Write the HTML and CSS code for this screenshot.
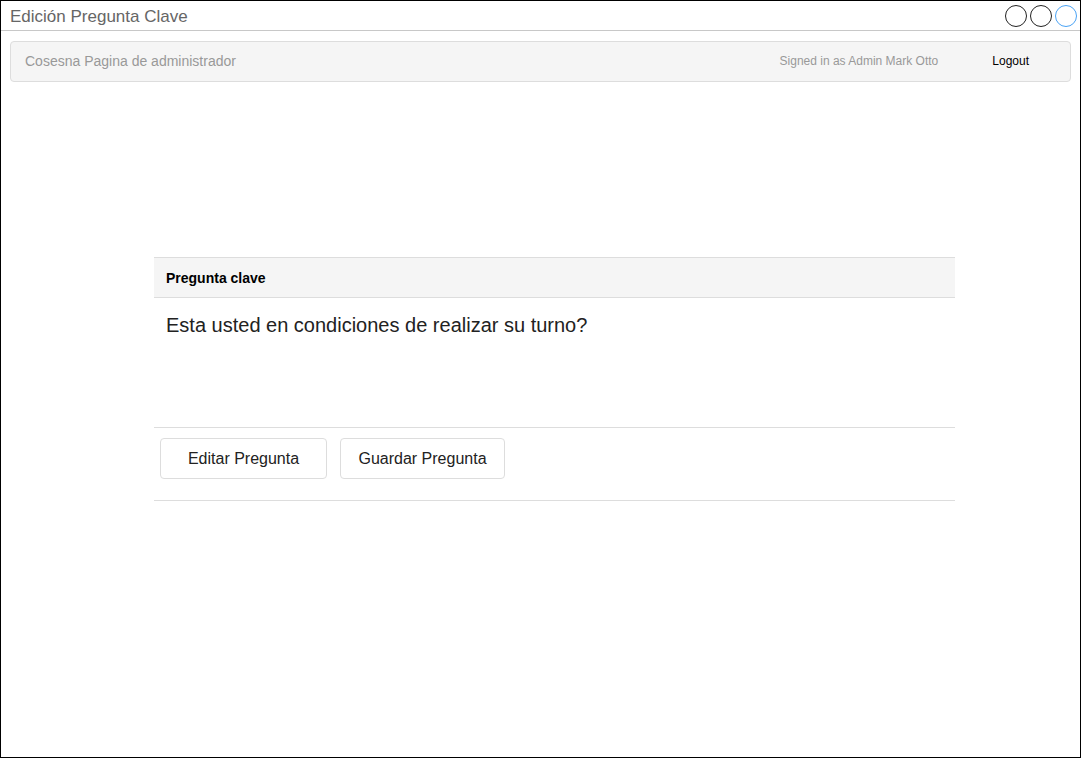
FILE: index.html
```html
<!DOCTYPE html>
<html lang="es">
<head>
<meta charset="utf-8">
<link rel="stylesheet" href="styles.css">
</head>
<body>
<div class="window">
  <div class="titlebar">
    <span class="title">Edición Pregunta Clave</span>
    <div class="controls">
      <span class="dot"></span>
      <span class="dot"></span>
      <span class="dot blue"></span>
    </div>
  </div>
  <div class="navbar">
    <span class="brand">Cosesna Pagina de administrador</span>
    <span class="signed">Signed in as Admin Mark Otto</span>
    <span class="logout">Logout</span>
  </div>
  <div class="panel">
    <div class="panel-head">Pregunta clave</div>
    <div class="panel-body">Esta usted en condiciones de realizar su turno?</div>
    <div class="panel-foot">
      <button class="btn btn-edit">Editar Pregunta</button>
      <button class="btn btn-save">Guardar Pregunta</button>
    </div>
  </div>
</div>
</body>
</html>
```
FILE: styles.css
```css
* { box-sizing: border-box; }
html, body { margin: 0; padding: 0; }
body {
  font-family: "Liberation Sans", Arial, sans-serif;
  background: #fff;
}
.window {
  width: 1081px;
  height: 758px;
  border: 1px solid #000;
  position: relative;
  overflow: hidden;
}
.titlebar {
  height: 30px;
  border-bottom: 1px solid #c8c8c8;
  display: flex;
  align-items: center;
  justify-content: space-between;
  padding: 0 3px 0 9px;
}
.title {
  font-size: 17px;
  color: #666;
  line-height: 1;
  margin-top: 1px;
}
.controls { display: flex; gap: 3px; }
.dot {
  width: 22px;
  height: 22px;
  border: 1px solid #222;
  border-radius: 50%;
  display: block;
}
.dot.blue { border-color: #4aa3f5; }
.navbar {
  margin: 10px 9px 0 9px;
  height: 41px;
  background: #f5f5f5;
  border: 1px solid #ddd;
  border-radius: 4px;
  display: flex;
  align-items: center;
  padding: 0 0 1px 14px;
}
.brand { font-size: 14px; color: #999; flex: 1; }
.signed { font-size: 12px; color: #999; margin-right: 54px; }
.logout { font-size: 12px; color: #000; margin-right: 41px; }
.panel {
  margin: 175px 0 0 153px;
  width: 801px;
}
.panel-head {
  height: 41px;
  background: #f5f5f5;
  border-top: 1px solid #ddd;
  border-bottom: 1px solid #ddd;
  font-size: 14px;
  font-weight: bold;
  color: #000;
  padding: 12px 12px 0;
}
.panel-body {
  height: 130px;
  font-size: 20px;
  color: #222;
  padding: 16px 12px 0;
  border-bottom: 1px solid #ddd;
}
.panel-foot {
  height: 73px;
  border-bottom: 1px solid #ddd;
  display: flex;
  gap: 13px;
  padding: 10px 6px 0;
}
.btn {
  height: 41px;
  background: #fff;
  border: 1px solid #ddd;
  border-radius: 4px;
  font-family: "Liberation Sans", Arial, sans-serif;
  font-size: 16px;
  color: #222;
}
.btn-edit { width: 167px; }
.btn-save { width: 165px; }
```
